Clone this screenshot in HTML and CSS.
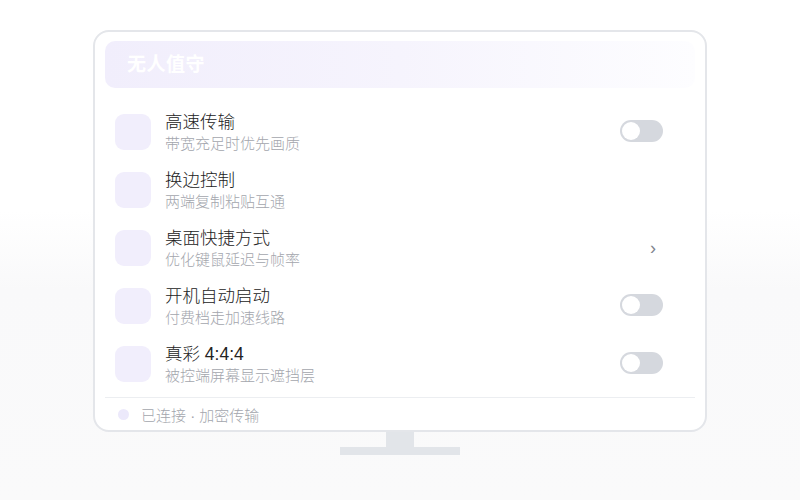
FILE: index.html
```html
<!DOCTYPE html>
<html lang="zh-CN">
  <head>
    <title>无人值守</title>
    <meta charset="utf-8" />
    <meta name="viewport" content="width=device-width, initial-scale=1" />
    <link rel="stylesheet" href="styles.css">
  </head>

  <body>
    <div class="stage">
      <div class="monitor">
        <div class="banner">无人值守</div>

        <div class="list">
          <div class="row">
            <div class="icon"></div>
            <div class="text">
              <div class="title">高速传输</div>
              <div class="sub">带宽充足时优先画质</div>
            </div>
            <div class="toggle"><span class="knob"></span></div>
          </div>

          <div class="row">
            <div class="icon"></div>
            <div class="text">
              <div class="title">换边控制</div>
              <div class="sub">两端复制粘贴互通</div>
            </div>
          </div>

          <div class="row">
            <div class="icon"></div>
            <div class="text">
              <div class="title">桌面快捷方式</div>
              <div class="sub">优化键鼠延迟与帧率</div>
            </div>
            <div class="chevron">›</div>
          </div>

          <div class="row">
            <div class="icon"></div>
            <div class="text">
              <div class="title">开机自动启动</div>
              <div class="sub">付费档走加速线路</div>
            </div>
            <div class="toggle"><span class="knob"></span></div>
          </div>

          <div class="row">
            <div class="icon"></div>
            <div class="text">
              <div class="title">真彩 4:4:4</div>
              <div class="sub">被控端屏幕显示遮挡层</div>
            </div>
            <div class="toggle"><span class="knob"></span></div>
          </div>
        </div>

        <div class="status">
          <span class="dot"></span>
          <span>已连接 · 加密传输</span>
        </div>
      </div>

      <div class="neck"></div>
      <div class="base"></div>
    </div>
  </body>
</html>
```

FILE: styles.css
```css
html,
body {
  margin: 0;
  height: 100%;
}

body {
  font-family: "Liberation Sans", "Noto Sans CJK SC", sans-serif;
  font-weight: 300;
  background: linear-gradient(to bottom, #fff 0%, #fff 42%, #f9f9fa 58%, #fafafa 100%);
}

.stage {
  display: flex;
  flex-direction: column;
  align-items: center;
  padding-top: 30px;
}

.monitor {
  box-sizing: border-box;
  width: 614px;
  height: 402px;
  border: 2px solid #e4e6ea;
  border-radius: 16px;
  background: #fff;
  padding: 9px 10px 0 10px;
  display: flex;
  flex-direction: column;
}

.banner {
  height: 47px;
  border-radius: 10px;
  background: linear-gradient(to right, #f1eefc 0%, #f6f4fd 50%, #fdfdff 100%);
  color: #fff;
  font-size: 19px;
  font-weight: 700;
  line-height: 47px;
  padding-left: 22px;
  letter-spacing: 0.5px;
}

.list {
  padding-top: 15px;
}

.row {
  display: flex;
  align-items: center;
  height: 58px;
  padding-left: 10px;
  padding-right: 32px;
}

.icon {
  width: 36px;
  height: 36px;
  border-radius: 9px;
  background: #f1eefc;
  flex: none;
}

.text {
  flex: 1;
  margin-left: 14px;
  margin-top: 0;
}

.title {
  font-size: 17.5px;
  line-height: 23px;
  color: #222;
}

.sub {
  font-size: 15px;
  line-height: 20px;
  color: #a3a6ad;
}

.toggle {
  width: 43px;
  height: 22px;
  margin-top: -3px;
  border-radius: 11px;
  background: #d5d8de;
  display: flex;
  align-items: center;
  padding-left: 2px;
  box-sizing: border-box;
}

.knob {
  width: 18px;
  height: 18px;
  border-radius: 50%;
  background: #fff;
}

.chevron {
  font-size: 18px;
  color: #80858d;
  margin-right: 7px;
  line-height: 1;
}

.status {
  margin-top: 4px;
  border-top: 1px solid #eceef1;
  display: flex;
  align-items: center;
  height: 32px;
  padding-left: 13px;
  font-size: 15px;
  color: #a3a6ad;
}

.dot {
  width: 11px;
  height: 11px;
  border-radius: 50%;
  background: #ece9fb;
  margin-right: 12px;
}

.neck {
  width: 28px;
  height: 15px;
  background: #e2e5e9;
}

.base {
  width: 120px;
  height: 8px;
  background: #e2e5e9;
}
```
